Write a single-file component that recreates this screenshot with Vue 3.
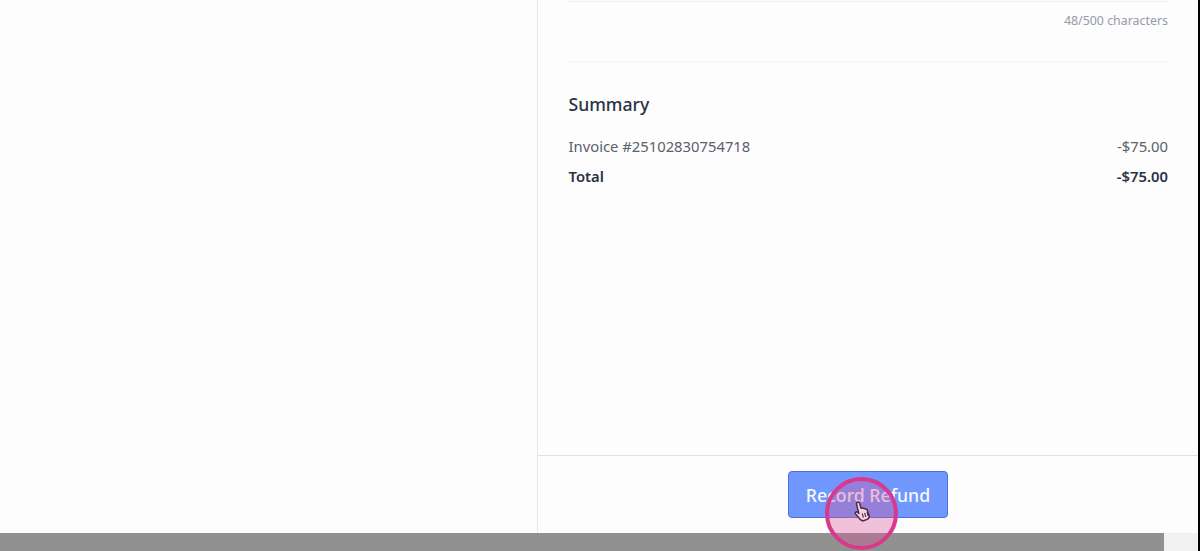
<template>
  <div class="page">
    <div class="main">
      <div class="left"></div>
      <div class="panel">
        <div class="panel-body">
          <div class="textarea-end"></div>
          <div class="char-count">48/500 characters</div>
          <hr class="divider">
          <h3 class="summary-title">Summary</h3>
          <div class="summary-row first">
            <span>Invoice #25102830754718</span>
            <span>-$75.00</span>
          </div>
          <div class="summary-row total">
            <span>Total</span>
            <span>-$75.00</span>
          </div>
        </div>
        <div class="panel-footer">
          <button class="btn-record">Record Refund</button>
        </div>
      </div>
    </div>
    <div class="hscroll">
      <div class="hscroll-thumb"></div>
      <div class="hscroll-track"></div>
    </div>

    <!-- recorded click highlight -->
    <div class="click-ring"></div>
    <svg class="cursor" width="19" height="21" viewBox="0 0 19 21">
      <path d="M3.6 1.2c.9-.3 1.7.2 2 1l1.5 5.2 1-.3c.7-.2 1.3 0 1.7.5.6-.2 1.3 0 1.7.6.7-.2 1.4.1 1.7.7l1.7 4.6c.8 2.3-.2 4.4-2.4 5.2l-2.4.8c-1.5.5-3 .1-4-1.2L1.6 13c-.5-.7-.4-1.5.2-1.9.6-.5 1.4-.3 2 .3l1.1 1.2L2.5 3c-.2-.8.3-1.6 1.1-1.8z" fill="#f6d3e2" stroke="#4a2740" stroke-width="1.4" stroke-linejoin="round"/>
      <path d="M8.2 12.5l1.2 4M10.6 11.8l1.2 4M13 11l1.2 4" stroke="#4a2740" stroke-width="1.1" fill="none"/>
    </svg>
  </div>
</template>

<script setup>
</script>

<style>
html, body {
  margin: 0;
  background: #000;
}
</style>

<style scoped>
.page {
  position: relative;
  width: 1198px;
  height: 551px;
  display: flex;
  flex-direction: column;
  background: #fdfdfd;
  font-family: "Noto Sans", "Open Sans", sans-serif;
  overflow: hidden;
}

.main {
  flex: 1;
  display: flex;
  min-height: 0;
}

.left {
  width: 537px;
  flex-shrink: 0;
  border-right: 1px solid #e8e8ea;
}

.panel {
  flex: 1;
  display: flex;
  flex-direction: column;
  min-width: 0;
}

.panel-body {
  flex: 1;
  padding: 0 30px 0 30.5px;
}

.textarea-end {
  height: 1px;
  border: 1px solid #eeeff1;
  border-top: none;
  border-radius: 0 0 4px 4px;
}

.char-count {
  margin-top: 11px;
  text-align: right;
  font-size: 12.4px;
  line-height: 16px;
  color: #959ba8;
}

.divider {
  border: none;
  border-top: 1px solid #f4f5f6;
  margin: 32px 0 0;
}

.summary-title {
  margin: 29px 0 0;
  font-size: 17.6px;
  line-height: 26px;
  font-weight: 500;
  color: #2b3245;
}

.summary-row {
  display: flex;
  justify-content: space-between;
  margin-top: 9px;
  font-size: 14.8px;
  line-height: 21px;
  color: #5a606c;
}

.summary-row.first {
  margin-top: 19px;
}

.summary-row.total {
  font-weight: 600;
  color: #2b3245;
}

.panel-footer {
  display: flex;
  justify-content: center;
  padding: 15px 0 15px;
  border-top: 1px solid #dde1e6;
}

.btn-record {
  width: 160px;
  height: 47px;
  border: 1px solid #4a6fd8;
  border-radius: 4px;
  background: #7097fd;
  color: #f7f9ff;
  font-family: inherit;
  font-size: 17.7px;
  font-weight: 500;
  padding: 0;
}

.hscroll {
  display: flex;
  height: 18px;
  flex-shrink: 0;
}

.hscroll-thumb {
  width: 1164px;
  background: #919191;
}

.hscroll-track {
  flex: 1;
  background: #f1f1f1;
}

.click-ring {
  position: absolute;
  left: 825px;
  top: 477px;
  width: 73px;
  height: 73px;
  box-sizing: border-box;
  border: 4px solid #d8398a;
  border-radius: 50%;
  background: rgba(215, 85, 150, 0.36);
}

.cursor {
  position: absolute;
  left: 854px;
  top: 501px;
}
</style>
